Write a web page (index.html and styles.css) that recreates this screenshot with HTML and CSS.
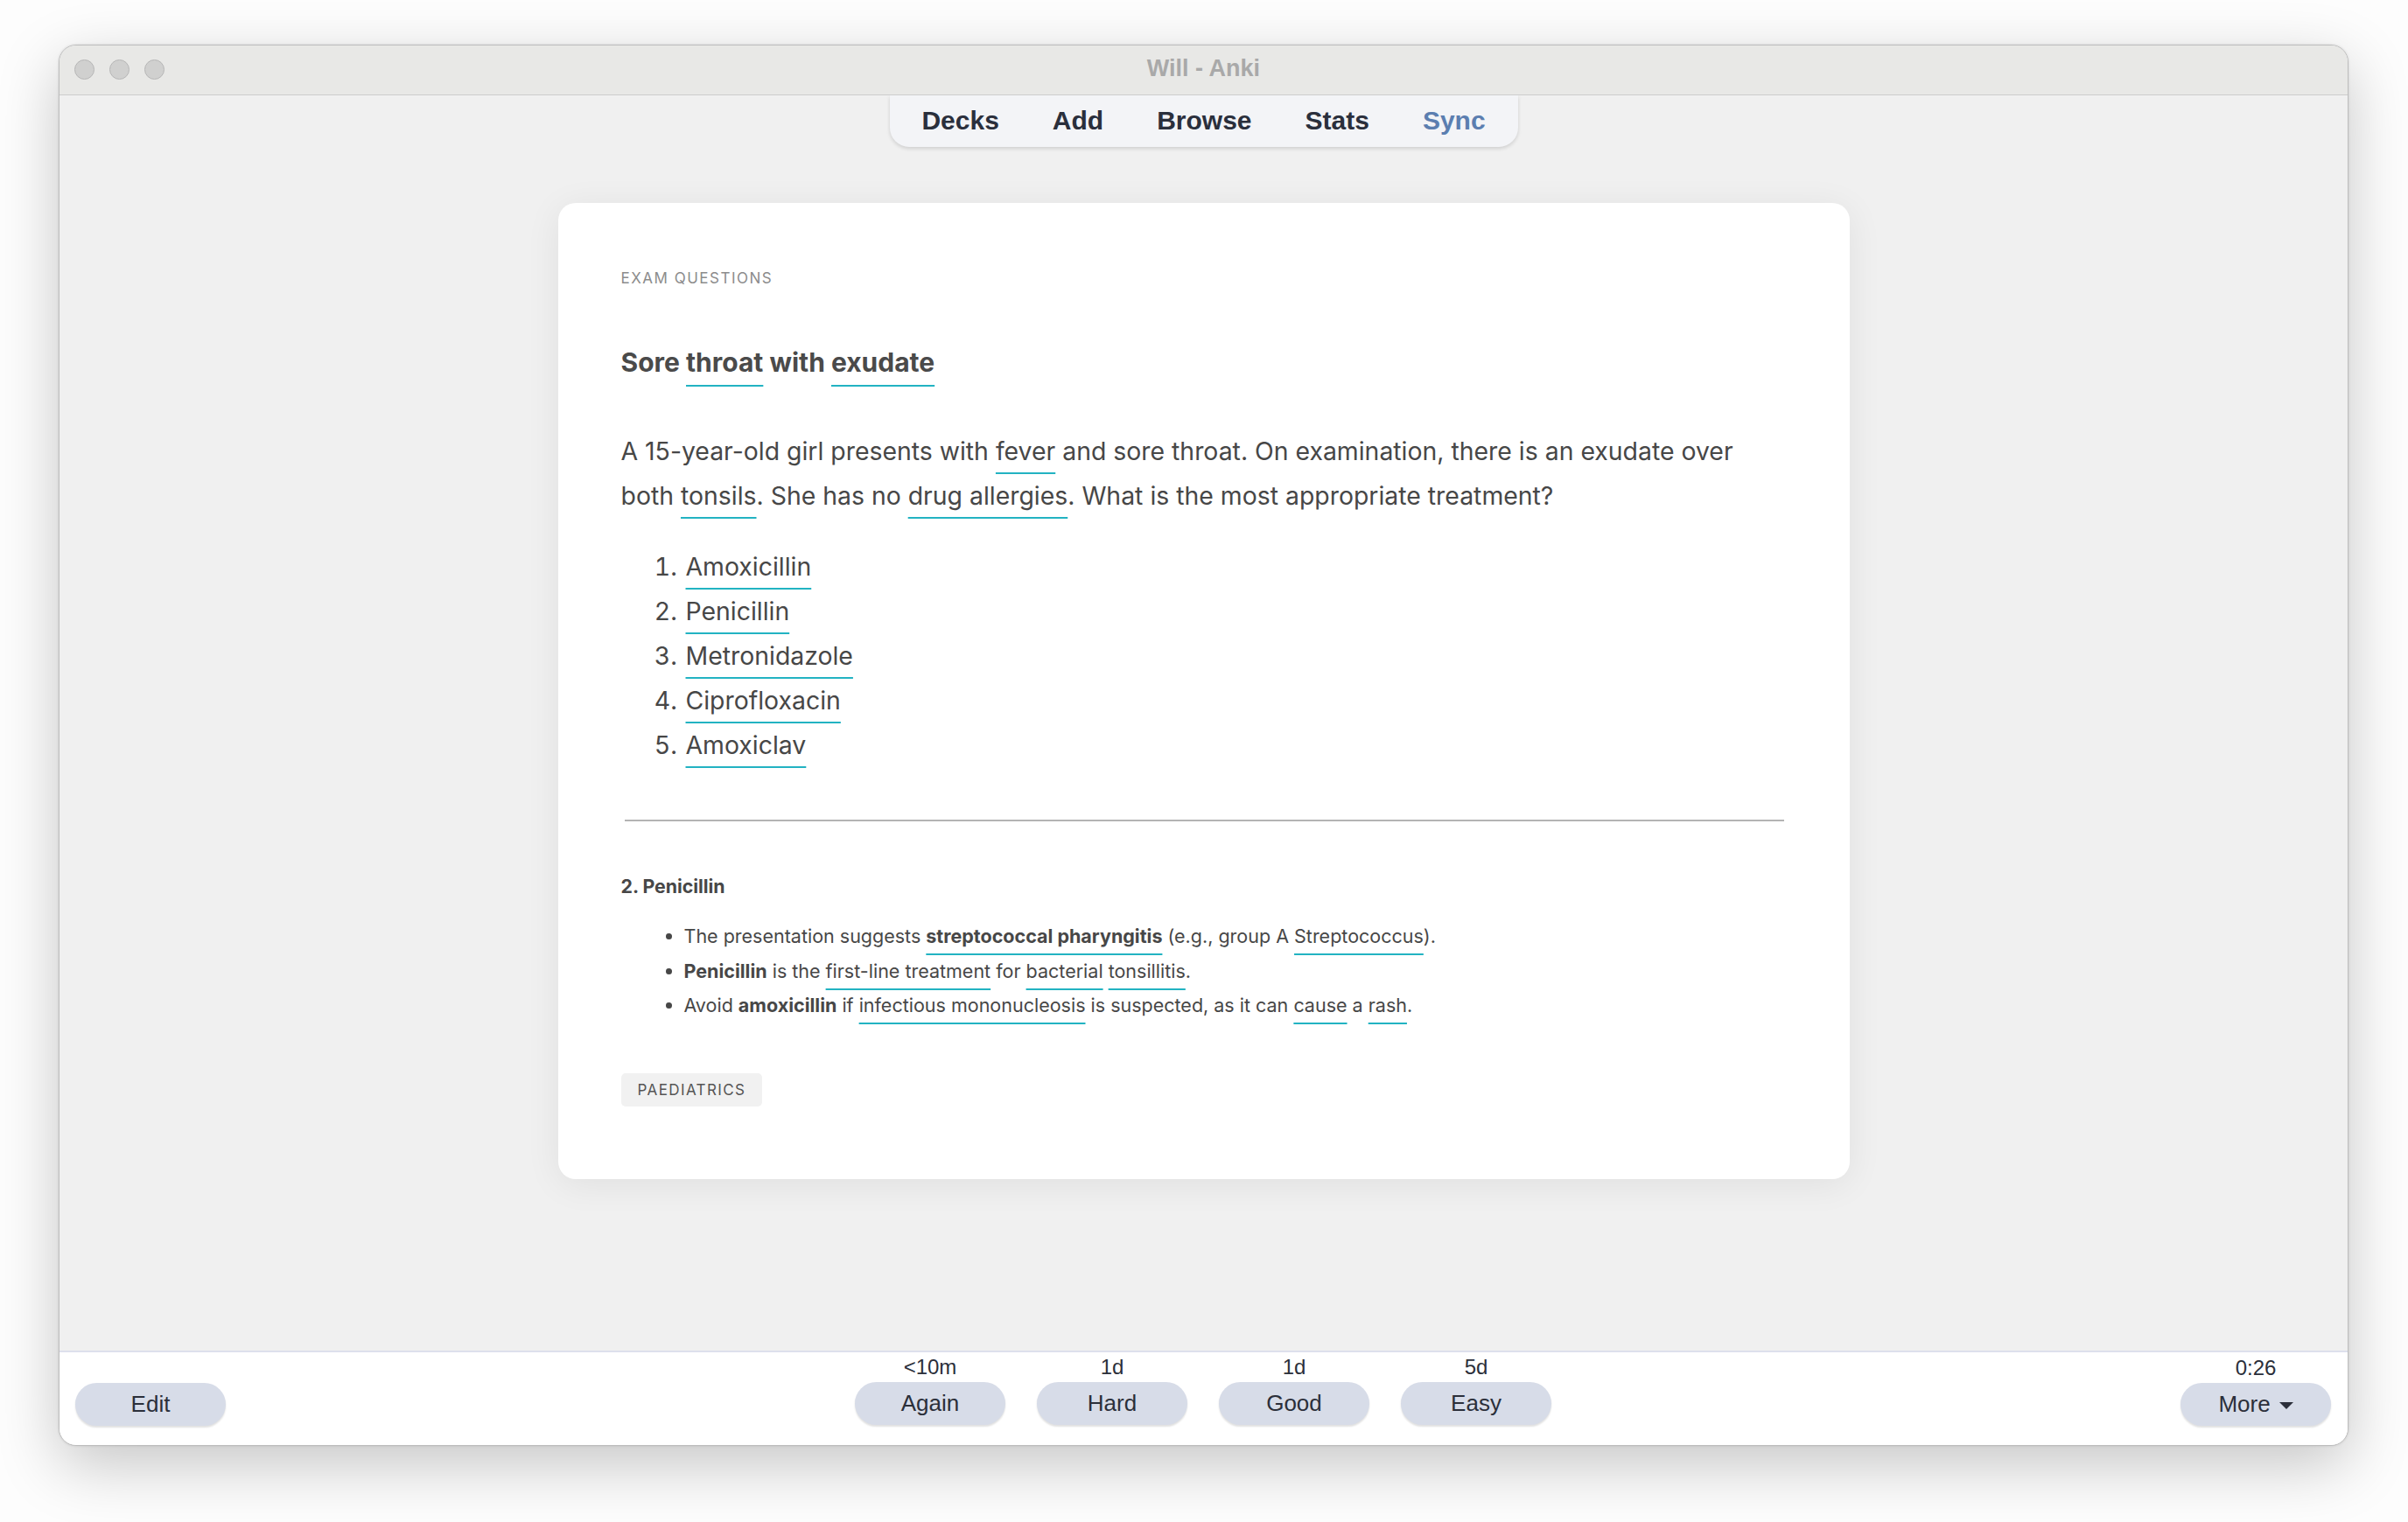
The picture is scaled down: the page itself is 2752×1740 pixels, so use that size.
FILE: index.html
```html
<!DOCTYPE html>
<html>
<head>
<meta charset="utf-8">
<title>Will - Anki</title>
<link rel="stylesheet" href="styles.css">
</head>
<body>
<div class="window">
  <div class="titlebar">
    <div class="lights"><span class="light"></span><span class="light"></span><span class="light"></span></div>
    <div class="title">Will - Anki</div>
  </div>
  <div class="main">
    <nav class="nav">
      <span class="nav-item">Decks</span>
      <span class="nav-item">Add</span>
      <span class="nav-item">Browse</span>
      <span class="nav-item">Stats</span>
      <span class="nav-item sync">Sync</span>
    </nav>
    <div class="card">
      <div class="deck">EXAM QUESTIONS</div>
      <h1 class="headline">Sore <span class="u">throat</span> with <span class="u">exudate</span></h1>
      <p class="question">A 15-year-old girl presents with <span class="u">fever</span> and sore throat. On examination, there is an exudate over<br>both <span class="u">tonsils</span>. She has no <span class="u">drug allergies</span>. What is the most appropriate treatment?</p>
      <ol class="options">
        <li><span class="u">Amoxicillin</span></li>
        <li><span class="u">Penicillin</span></li>
        <li><span class="u">Metronidazole</span></li>
        <li><span class="u">Ciprofloxacin</span></li>
        <li><span class="u">Amoxiclav</span></li>
      </ol>
      <hr class="divider">
      <div class="answer">2. Penicillin</div>
      <ul class="explain">
        <li>The presentation suggests <b class="u">streptococcal pharyngitis</b> (e.g., group A <span class="u">Streptococcus</span>).</li>
        <li><b>Penicillin</b> is the <span class="u">first-line treatment</span> for <span class="u">bacterial</span> <span class="u">tonsillitis</span>.</li>
        <li>Avoid <b>amoxicillin</b> if <span class="u">infectious mononucleosis</span> is suspected, as it can <span class="u">cause</span> a <span class="u">rash</span>.</li>
      </ul>
      <div class="tags"><span class="tag">PAEDIATRICS</span></div>
    </div>
  </div>
  <div class="bottombar">
    <div class="side left">
      <button class="btn">Edit</button>
    </div>
    <div class="answers">
      <div class="ans"><span class="due">&lt;10m</span><button class="btn">Again</button></div>
      <div class="ans"><span class="due">1d</span><button class="btn">Hard</button></div>
      <div class="ans"><span class="due">1d</span><button class="btn">Good</button></div>
      <div class="ans"><span class="due">5d</span><button class="btn">Easy</button></div>
    </div>
    <div class="side right">
      <span class="due">0:26</span>
      <button class="btn more">More <svg class="caret" width="16" height="9" viewBox="0 0 16 9"><path d="M0 0 L16 0 L8 8 Z" fill="#2b2f3a"/></svg></button>
    </div>
  </div>
</div>
</body>
</html>
```
FILE: styles.css
```css
* { box-sizing: border-box; }
html, body { margin: 0; padding: 0; }
body {
  width: 2752px;
  height: 1740px;
  background: #fdfdfd;
  padding: 51px 0 0 67px;
  font-family: "Liberation Sans", Arial, sans-serif;
  overflow: hidden;
}
.window {
  width: 2617px;
  height: 1602px;
  border: 1px solid #bdbdbd;
  border-radius: 20px;
  overflow: hidden;
  display: flex;
  flex-direction: column;
  background: #f0f0f0;
  box-shadow: 0 22px 70px rgba(0,0,0,0.22), 0 0 3px rgba(0,0,0,0.12);
}
.titlebar {
  height: 57px;
  flex: none;
  background: #e8e8e6;
  border-bottom: 1px solid #cdcdcd;
  display: flex;
  align-items: center;
  position: relative;
}
.lights {
  display: flex;
  gap: 17px;
  padding-left: 17px;
  padding-bottom: 1px;
}
.light {
  width: 23px;
  height: 23px;
  border-radius: 50%;
  background: #d0d0cf;
  border: 1px solid #b6b6b6;
}
.title {
  position: absolute;
  left: 0;
  right: 0;
  top: 0;
  bottom: 0;
  display: flex;
  align-items: center;
  justify-content: center;
  font-weight: bold;
  font-size: 27px;
  color: #a9a9a9;
  padding-bottom: 3px;
}
.main {
  flex: 1;
  display: flex;
  flex-direction: column;
  align-items: center;
  background: #f0f0f0;
}
.nav {
  width: 718px;
  height: 59px;
  background: #f3f4f7;
  border-radius: 0 0 22px 22px;
  box-shadow: 0 2px 4px rgba(0,0,0,0.14);
  display: flex;
  justify-content: center;
  align-items: center;
  gap: 61px;
  padding-bottom: 2px;
}
.nav-item {
  font-weight: bold;
  font-size: 30px;
  color: #2a2f3c;
}
.nav-item.sync { color: #5b7eb0; }
.card {
  margin-top: 64px;
  width: 1476px;
  background: #ffffff;
  border-radius: 20px;
  padding: 72px 75px 83px 72px;
  box-shadow: 0 6px 40px rgba(0,0,0,0.07);
  font-family: "Inter", "Liberation Sans", sans-serif;
  color: #474747;
}
.u {
  text-decoration: underline;
  text-decoration-color: #22b3c2;
  text-decoration-thickness: 2px;
  text-underline-offset: 0.5em;
}
.deck {
  font-size: 17px;
  line-height: 28px;
  letter-spacing: 1.5px;
  color: #8c8c8c;
}
.headline {
  margin: 60px 0 0;
  font-size: 30px;
  line-height: 44px;
  font-weight: 700;
  color: #4a4a4a;
}
.question {
  margin: 54px 0 0;
  font-size: 28.4px;
  line-height: 51px;
}
.options {
  margin: 30px 0 0;
  padding-left: 72px;
  font-size: 28.4px;
  line-height: 51px;
}
.options li { padding-left: 2px; }
.divider {
  margin: 60px 0 0 4px;
  border: none;
  border-top: 2px solid #b4b4b4;
  height: 0;
}
.answer {
  margin-top: 59px;
  font-size: 21.3px;
  line-height: 30px;
  font-weight: 700;
}
.explain {
  margin: 23px 0 0;
  padding-left: 72px;
  font-size: 21.5px;
  line-height: 39.5px;
}
.explain .u { text-underline-offset: 0.55em; }
.explain b { font-weight: 700; }
.tags {
  margin-top: 57px;
  display: flex;
}
.tag {
  height: 38px;
  padding: 0 19px;
  display: flex;
  align-items: center;
  background: #f1f1f1;
  border-radius: 5px;
  font-size: 17px;
  letter-spacing: 1.4px;
  color: #555;
}
.bottombar {
  flex: none;
  height: 108px;
  background: #ffffff;
  border-top: 2px solid #dde0ec;
  display: flex;
  justify-content: space-between;
  padding: 2px 19px 0 18px;
}
.side {
  width: 172px;
  display: flex;
  flex-direction: column;
  align-items: center;
  justify-content: flex-end;
  padding-bottom: 22px;
}
.answers {
  display: flex;
  gap: 36px;
}
.ans {
  display: flex;
  flex-direction: column;
  align-items: center;
  gap: 2px;
}
.due {
  font-size: 24px;
  line-height: 30px;
  color: #2b2f3a;
}
.btn {
  width: 172px;
  height: 49px;
  border: none;
  border-radius: 25px;
  background: #d7dce8;
  box-shadow: 0 2px 2px rgba(0,0,0,0.12);
  font-family: "Liberation Sans", Arial, sans-serif;
  font-size: 26px;
  color: #2b2f3a;
  display: flex;
  align-items: center;
  justify-content: center;
  gap: 10px;
  padding: 0;
}
.side.right .due { margin-bottom: 2px; }
.caret { margin-top: 3px; }
```
